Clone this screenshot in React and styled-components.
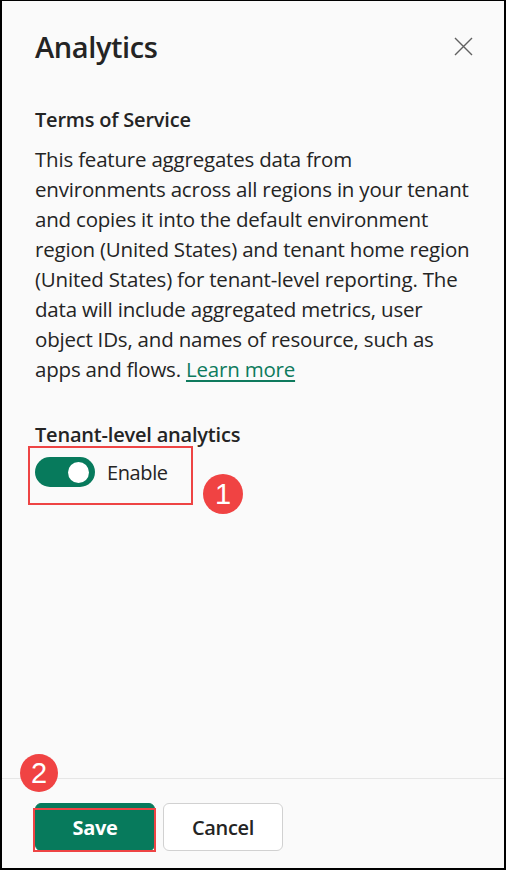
import styled, { createGlobalStyle } from 'styled-components';

const GlobalStyle = createGlobalStyle`
    html, body, #root {
        margin: 0;
        height: 100%;
    }

    body {
        font-family: "Open Sans", "Noto Sans", sans-serif;
        color: #242424;
        background: #fafafa;
    }

    * {
        box-sizing: border-box;
    }
`

const Frame = styled.div`
    height: 870px;
    display: flex;
    flex-direction: column;
    background: #fafafa;
    border: 2px solid #000;
    border-top-width: 1px;
`

const Body = styled.div`
    flex: 1;
    padding: 25px 33px 0;
`

const Header = styled.div`
    display: flex;
    align-items: center;
    justify-content: space-between;
    height: 40px;
`

const Title = styled.h2`
    margin: 0;
    font-size: 29px;
    font-weight: 600;
    letter-spacing: -0.4px;
`

const CloseButton = styled.button`
    display: flex;
    align-items: center;
    justify-content: flex-end;
    width: 30px;
    height: 30px;
    margin-right: -2px;
    padding: 0;
    border: none;
    background: transparent;
    color: #616161;
`

const Section = styled.div`
    margin-top: 39px;
`

const SectionTitle = styled.h3`
    margin: 0 0 9px;
    font-size: 20px;
    line-height: 30px;
    font-weight: 600;
    letter-spacing: -0.2px;
`

const Paragraph = styled.p`
    margin: 0;
    font-size: 20.5px;
    line-height: 30px;
    letter-spacing: -0.2px;
    white-space: nowrap;
`

const Link = styled.a`
    color: #0e7a5d;
    text-decoration: underline;
    text-underline-offset: 3px;
`

const Field = styled.div`
    margin-top: 36px;
`

const FieldLabel = styled.div`
    font-size: 20px;
    line-height: 30px;
    font-weight: 600;
    letter-spacing: -0.2px;
`

const SwitchRow = styled.div`
    position: relative;
    display: flex;
    align-items: center;
    gap: 12px;
    margin-top: 7px;
`

const Switch = styled.div`
    display: flex;
    align-items: center;
    justify-content: ${p => p.$on ? 'flex-end' : 'flex-start'};
    width: 60px;
    height: 30px;
    padding: 0 6px;
    border-radius: 15px;
    background: ${p => p.$on ? '#077a5c' : '#fff'};
`

const Knob = styled.span`
    width: 21px;
    height: 21px;
    border-radius: 50%;
    background: #fff;
`

const SwitchLabel = styled.span`
    font-size: 20px;
    letter-spacing: -0.4px;
`

const Highlight = styled.span`
    position: absolute;
    left: ${p => p.$left}px;
    top: ${p => p.$top}px;
    width: ${p => p.$w}px;
    height: ${p => p.$h}px;
    border: 2px solid #ee4444;
    pointer-events: none;
`

const Badge = styled.span`
    position: absolute;
    left: ${p => p.$left}px;
    top: ${p => p.$top}px;
    display: flex;
    align-items: center;
    justify-content: center;
    width: ${p => p.$size}px;
    height: ${p => p.$size}px;
    border-radius: 50%;
    background: #f04343;
    color: #fff;
    font-family: "Liberation Sans", Arial, sans-serif;
    font-size: 29px;
    line-height: 1;
`

const Footer = styled.div`
    display: flex;
    gap: 8px;
    padding: 24px 33px 17px;
    border-top: 1px solid #e6e6e6;
`

const SaveWrap = styled.div`
    position: relative;
`

const Button = styled.button`
    width: 120px;
    height: 48px;
    border-radius: 6px;
    font-family: inherit;
    font-size: 20px;
    letter-spacing: -0.3px;
    font-weight: 600;
    cursor: pointer;
`

const PrimaryButton = styled(Button)`
    background: #077a5c;
    border: 1px solid #077a5c;
    color: #fff;
    font-weight: 700;
`

const SecondaryButton = styled(Button)`
    background: #fff;
    border: 1px solid #d1d1d1;
    color: #242424;
`

const CloseIcon = () => (
    <svg width="19" height="19" viewBox="0 0 19 19" fill="none" stroke="currentColor" strokeWidth="1.4">
        <path d="M1 1L18 18M18 1L1 18" />
    </svg>
)

const App = () => {
    return <Frame>
        <GlobalStyle />
        <Body>
            <Header>
                <Title>Analytics</Title>
                <CloseButton aria-label="Close"><CloseIcon /></CloseButton>
            </Header>

            <Section>
                <SectionTitle>Terms of Service</SectionTitle>
                <Paragraph>
                    This feature aggregates data from<br />
                    environments across all regions in your tenant<br />
                    and copies it into the default environment<br />
                    region (United States) and tenant home region<br />
                    (United States) for tenant-level reporting. The<br />
                    data will include aggregated metrics, user<br />
                    object IDs, and names of resource, such as<br />
                    apps and flows. <Link href="#">Learn more</Link>
                </Paragraph>
            </Section>

            <Field>
                <FieldLabel>Tenant-level analytics</FieldLabel>
                <SwitchRow>
                    <Switch $on><Knob /></Switch>
                    <SwitchLabel>Enable</SwitchLabel>
                    <Highlight $left={-7} $top={-11} $w={165} $h={59} />
                    <Badge $left={168} $top={17} $size={40}>1</Badge>
                </SwitchRow>
            </Field>
        </Body>

        <Footer>
            <SaveWrap>
                <PrimaryButton>Save</PrimaryButton>
                <Highlight $left={-2} $top={5} $w={123} $h={44} />
                <Badge $left={-15} $top={-49} $size={38}>2</Badge>
            </SaveWrap>
            <SecondaryButton>Cancel</SecondaryButton>
        </Footer>
    </Frame>
}

export default App;
